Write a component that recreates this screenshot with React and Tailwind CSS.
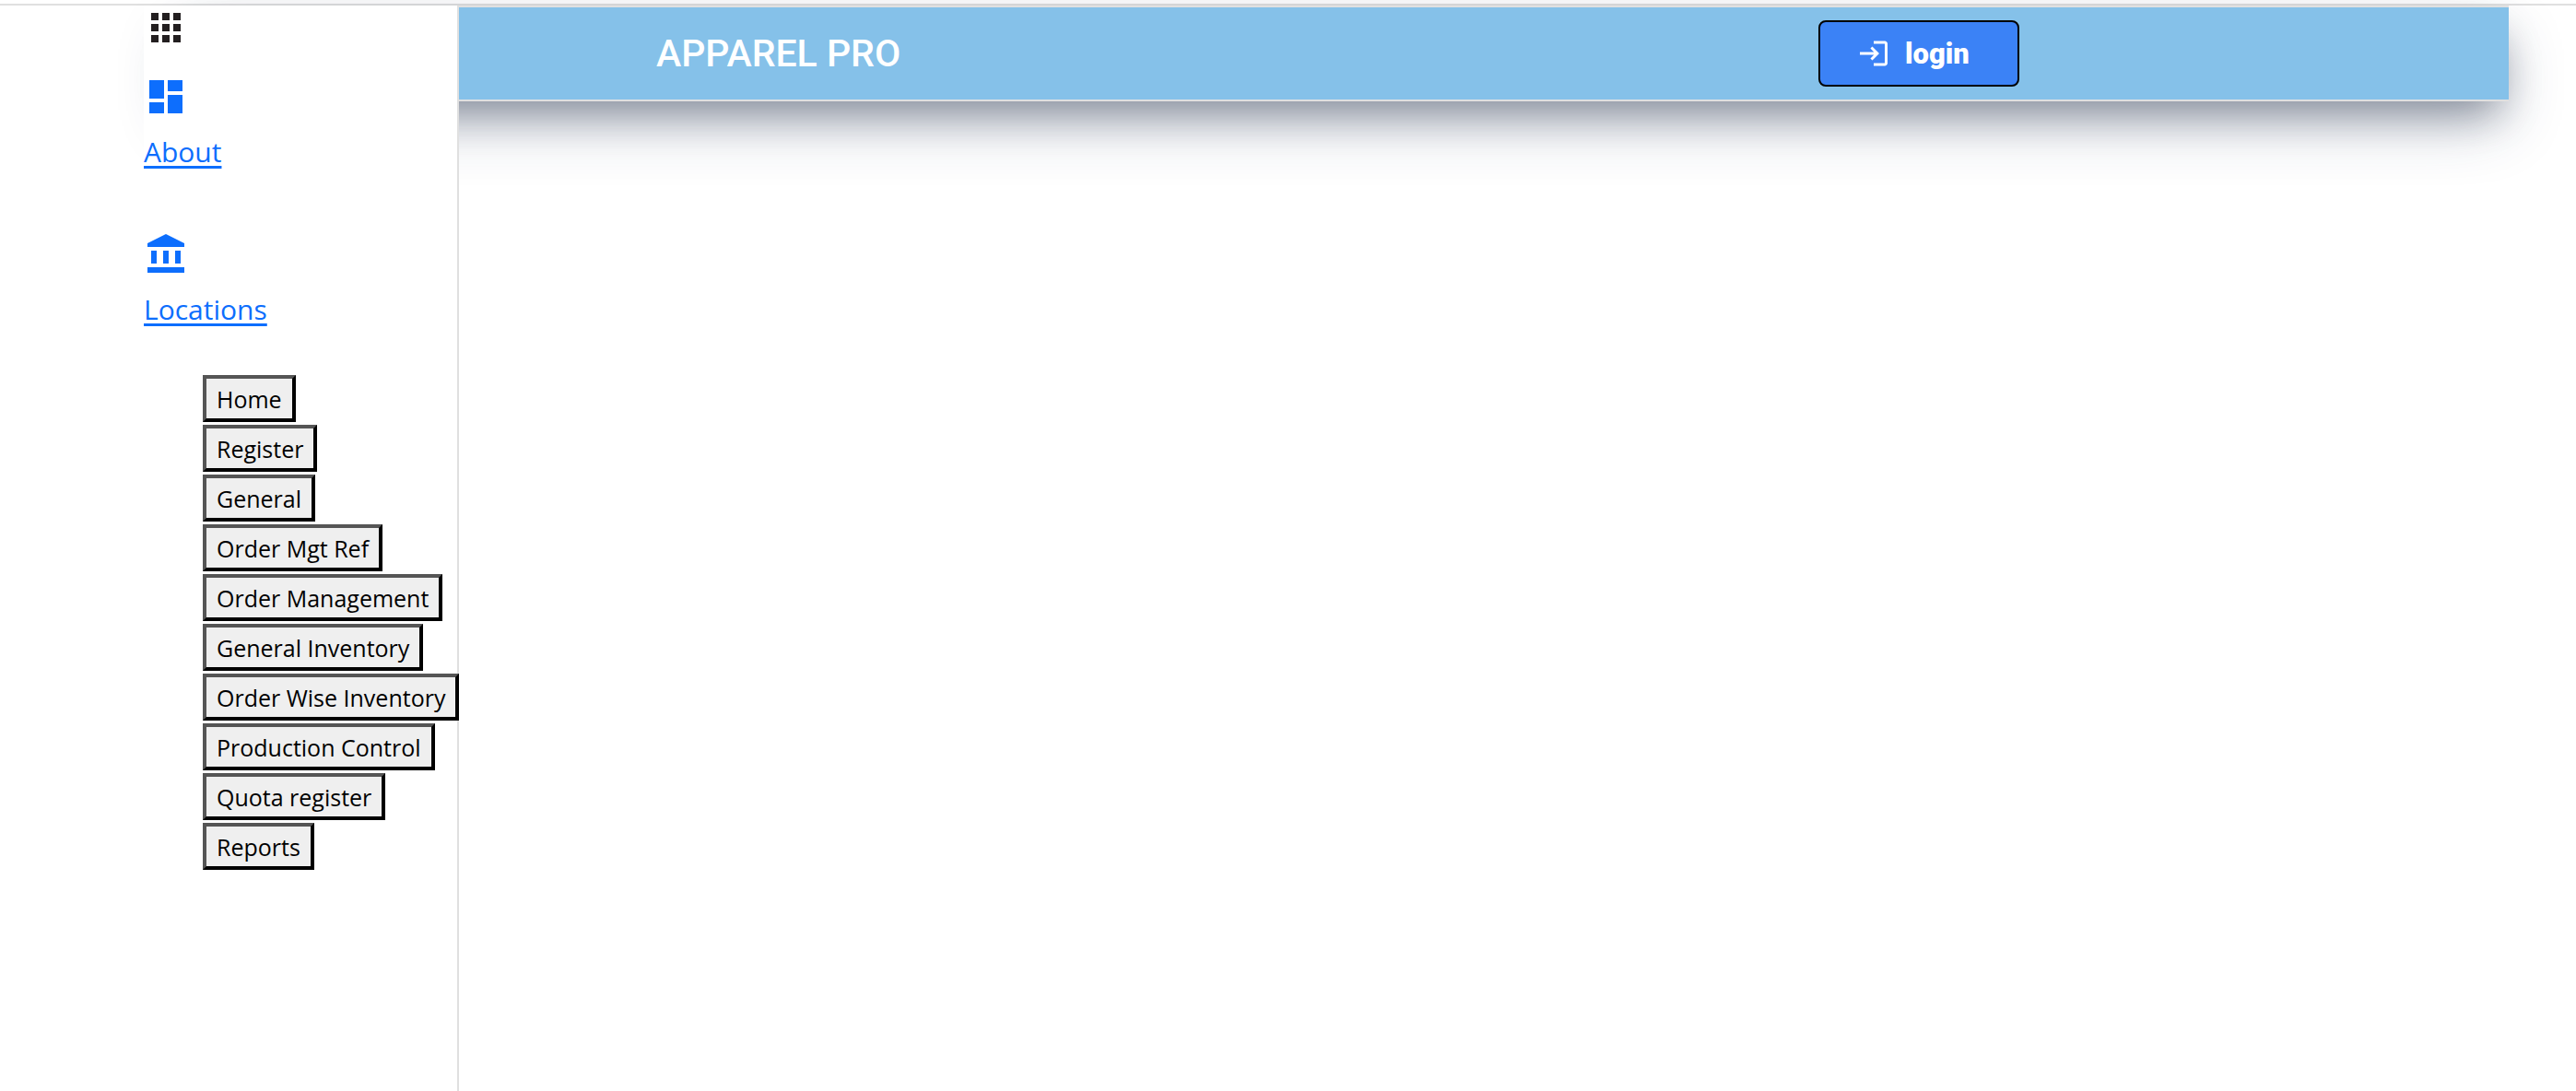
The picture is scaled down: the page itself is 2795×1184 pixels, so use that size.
import { MdAccountBalance, MdApps, MdDashboard, MdLogin } from "react-icons/md";

const sections = [
  "Home",
  "Register",
  "General",
  "Order Mgt Ref",
  "Order Management",
  "General Inventory",
  "Order Wise Inventory",
  "Production Control",
  "Quota register",
  "Reports",
];

function SideLink({ icon: Icon, label }) {
  return (
    <a href="#" className="flex flex-col items-start text-[#0d6efd]">
      <Icon className="size-12" />
      <span className="mt-3 text-[30px] leading-12 underline decoration-3 underline-offset-4">
        {label}
      </span>
    </a>
  );
}

function Sidebar() {
  return (
    <aside className="z-10 ml-[156px] w-[342px] shrink-0 border-r-2 border-[#e0e0e0] bg-white">
      <button type="button" aria-label="Menu" className="block text-[#231f20]">
        <MdApps className="size-12" />
      </button>
      <nav className="mt-[27px] flex flex-col gap-[63px]">
        <SideLink icon={MdDashboard} label="About" />
        <SideLink icon={MdAccountBalance} label="Locations" />
      </nav>
      <ul className="mt-[47px] flex flex-col items-start gap-[3px] pl-16">
        {sections.map((label) => (
          <li key={label} className="flex">
            <button
              type="button"
              className="h-[51px] border-t-4 border-r-4 border-b-4 border-l-4 border-t-[#555] border-r-black border-b-black border-l-[#555] bg-[#efefef] px-[11px] pt-0.5 text-[25px] leading-none whitespace-nowrap text-black"
            >
              {label}
            </button>
          </li>
        ))}
      </ul>
    </aside>
  );
}

/* The bar runs on beneath the sidebar, so its shadow has no left corner there. */
function Header() {
  return (
    <header className="mr-[73px] -ml-[310px] flex h-[104px] items-center justify-between border-y-2 border-[#e0e0e0] bg-[#85c1e9] pr-[531px] pl-[524px] font-[Roboto,sans-serif] text-white shadow-[0_28px_68px_-8px_rgba(30,50,90,0.3),0_22px_44px_-12px_rgba(17,24,39,0.38)]">
      <h1 className="pt-0.5 text-[41px] font-medium">APPAREL PRO</h1>
      <button
        type="button"
        className="flex h-[72px] w-[218px] items-center gap-4 rounded-lg border-2 border-black bg-[#3b82f6] pl-10 text-[31px] font-black"
      >
        <MdLogin className="size-9" />
        <span className="pt-0.5">login</span>
      </button>
    </header>
  );
}

export default function App() {
  return (
    <div className="bg-white pt-1 font-['Open_Sans',sans-serif]">
      <div className="flex min-h-[calc(100vh-4px)] border-t-2 border-[#e0e0e0]">
        <Sidebar />
        <main className="min-w-0 flex-1">
          <Header />
        </main>
      </div>
    </div>
  );
}
